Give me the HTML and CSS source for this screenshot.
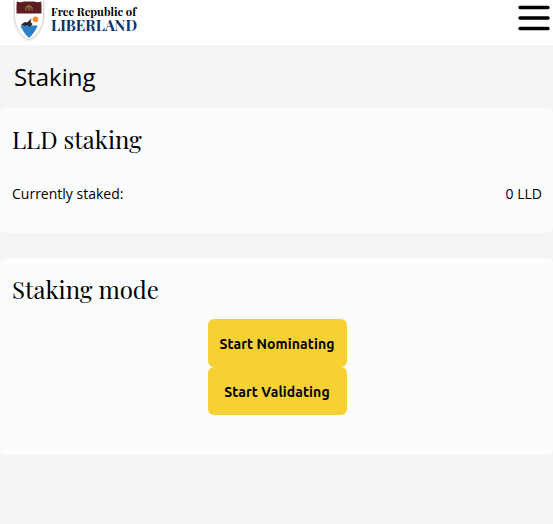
FILE: index.html
```html
<!DOCTYPE html>
<html lang="en">
<head>
<meta charset="utf-8">
<title>Staking</title>
<link rel="stylesheet" href="styles.css">
</head>
<body>
<header class="topbar">
  <div class="brand">
    <svg class="crest" width="34" height="44" viewBox="0 0 34 44">
      <path d="M2 0Q4 2 3 5V17C4 28 9 36 17 39.500C25 36 30 28 31 17V5Q30 2 32 0Z" fill="#fff"/>
      <path d="M4.500 1.500Q8 3 12 1.500H22Q26 3 29.500 1.500Q29 3 29.500 5V13.500H4.500V5Q5 3 4.500 1.500Z" fill="#5b1d22"/>
      <path d="M14 10.500V8Q17 3.500 20 8V10.500M17 6V11" fill="none" stroke="#8b7040" stroke-width="1.400"/>
      <path d="M8.300 25.500H25.800C23.500 30.500 21 34.500 17 38C13 34.500 10.500 30.500 8.300 25.500Z" fill="#2b7fc8"/>
      <circle cx="23.500" cy="19.200" r="2.800" fill="#f58a30"/>
      <path d="M9 24.500L13 22L15 22.500L19.500 18.500L18.500 22L20.500 24L18 27L15.500 25.500L12 26Z" fill="#24282f"/>
    </svg>
    <div class="wordmark"><span class="small">Free Republic of</span><span class="large">LIBERLAND</span></div>
  </div>
  <svg class="menu" width="32" height="27" viewBox="0 0 32 27"><path d="M2 2.500H30M2 13H30M2 23.500H30" stroke="#000" stroke-width="3.400" stroke-linecap="round"/></svg>
</header>
<main>
  <h1>Staking</h1>
  <section class="card staking">
    <h2>LLD staking</h2>
    <div class="row"><span>Currently staked:</span><span>0 LLD</span></div>
  </section>
  <section class="card mode">
    <h2>Staking mode</h2>
    <div class="actions"><button>Start Nominating</button><button>Start Validating</button></div>
  </section>
</main>
</body>
</html>
```
FILE: styles.css
```css
* { box-sizing: border-box; }
body { margin: 0; background: #f5f5f5; font-family: "Open Sans", "Noto Sans", sans-serif; color: #000; }
.topbar { height: 45px; background: #fff; display: flex; justify-content: space-between; padding: 0 3px 0 12px; }
.brand { display: flex; gap: 5px; }
.crest { overflow: visible; filter: drop-shadow(0 0 1.5px #0006); }
.wordmark { display: flex; flex-direction: column; padding-top: 5px; font-family: "Playfair Display", "Liberation Serif", serif; font-weight: 700; white-space: nowrap; }
.small { font-size: 11.3px; line-height: 14px; }
.large { font-size: 15px; line-height: 12px; color: #0c3468; }
.menu { margin-top: 5px; }
h1 { margin: 0; height: 63px; padding: 15px 14px; font-size: 24px; line-height: 34px; font-weight: 400; }
.card { background: #fafcfe; border-radius: 6px; padding: 15px 11px 16px 12px; }
h2 { margin: 0; font: 400 24px/32px "Playfair Display", "Liberation Serif", serif; }
.staking { height: 125px; margin-bottom: 25px; }
.row { display: flex; justify-content: space-between; margin-top: 29px; font-size: 14px; line-height: 20px; }
.mode { height: 197px; }
.actions { width: 139px; margin: 14px auto 0; display: flex; flex-direction: column; }
button { height: 48px; border: 0; border-radius: 6px; background: #f7d033; padding: 2px 0 0; font: 700 14px Ubuntu, "Noto Sans", "Open Sans", sans-serif; letter-spacing: 0.1px; color: #000; }
```
